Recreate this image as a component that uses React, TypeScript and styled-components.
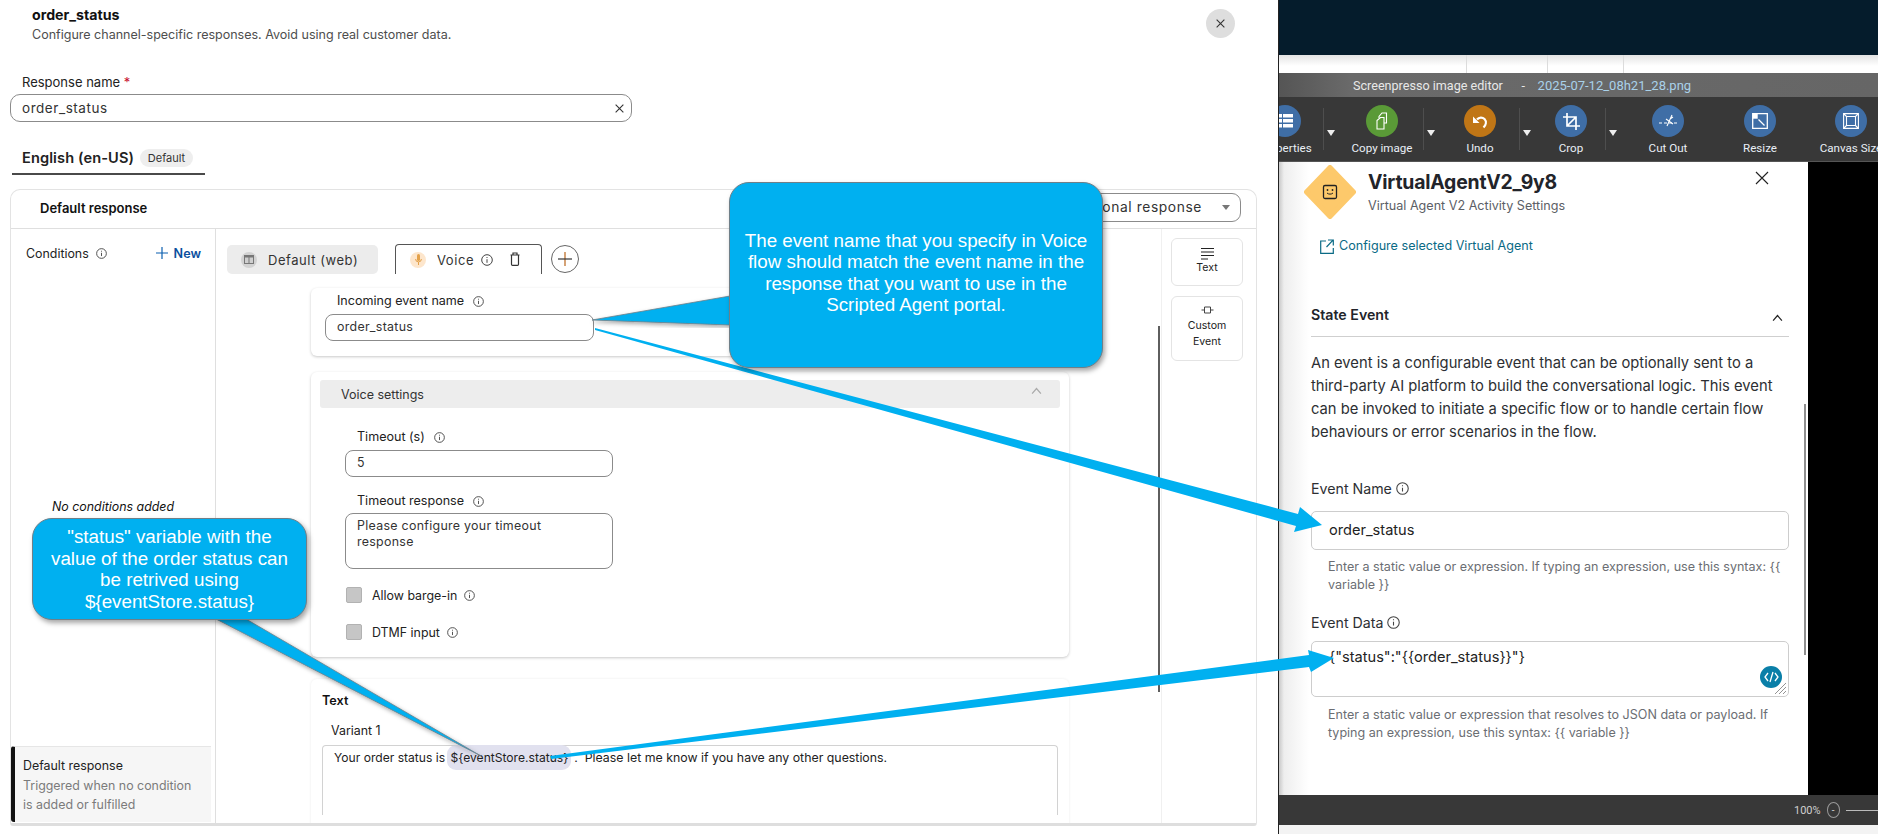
import React from "react";
import styled, { createGlobalStyle } from "styled-components";

const Global = createGlobalStyle`
  html, body { margin: 0; padding: 0; background: #fff; overflow: hidden; }
  * { box-sizing: border-box; }
  #root { width: 1878px; height: 834px; position: relative; overflow: hidden; font-family: Inter, "Liberation Sans", sans-serif; color: #1d1d1d; }
`;

const Page = styled.div`display: flex; width: 1878px; height: 834px;`;

/* ---------- left modal ---------- */
const Modal = styled.section`width: 1278px; height: 834px; background: #fff; position: relative; padding: 0 21px 0 10px; display: flex; flex-direction: column;`;
const ModalHead = styled.header`display: flex; justify-content: space-between; padding: 6px 0 0 22px; height: 70px;`;
const ModalTitle = styled.h1`margin: 0; font-size: 14.200px; line-height: 17px; font-weight: 700; color: #111;`;
const ModalSub = styled.p`margin: 3px 0 0; font-size: 12.520px; line-height: 17px; color: #4e4e4e;`;
const CloseRound = styled.div`width: 29px; height: 29px; border-radius: 50%; background: #dedede; display: flex; align-items: center; justify-content: center; margin: 3px 22px 0 0; color: #222;`;
const FieldLabel = styled.label`display: block; font-size: 13px; line-height: 18px; padding: 3px 0 0 12px; height: 24px; color: #222; b { color: #c8102e; font-weight: 400; }`;
const NameInput = styled.div`width: 622px; height: 28px; border: 1px solid #8b8b8b; border-radius: 10px; display: flex; align-items: center; justify-content: space-between; padding: 0 7px 0 11px; font-size: 13.500px; letter-spacing: .55px; color: #333;`;
const TabRow = styled.div`margin: 25px 0 0 2px; width: 193px; height: 28px; border-bottom: 2px solid #4a4a4a; display: flex; align-items: flex-start; padding: 1px 0 0 10px; gap: 6px;`;
const TabName = styled.span`font-size: 14.600px; font-weight: 600; line-height: 20px; letter-spacing: .1px; color: #222; white-space: nowrap;`;
const Badge = styled.span`flex: none; width: 53px; height: 18px; margin-top: 1px; border-radius: 9px; background: #eee; font-size: 11px; line-height: 18px; text-align: center; color: #333;`;

const Card = styled.div`margin-top: 14px; width: 1247px; height: 637px; border: 1px solid #e3e3e3; border-bottom: 3px solid #dedede; border-radius: 10px 10px 3px 3px; display: flex; flex-direction: column; overflow: hidden;`;
const CardHead = styled.div`height: 39px; flex: none; border-bottom: 1px solid #dfdfdf; display: flex; align-items: center; justify-content: space-between; padding: 0 15px 0 29px;`;
const CardTitle = styled.strong`font-size: 13px; font-weight: 600; color: #111; margin-top: -2px;`;
const Select = styled.div`width: 220px; height: 29px; margin-top: -4px; border: 1px solid #8b8b8b; border-radius: 9px; display: flex; align-items: center; justify-content: flex-end; padding-right: 10px; gap: 20px; font-size: 13.800px; letter-spacing: .6px; color: #333; white-space: nowrap;`;
const Caret = styled.i`flex: none; width: 0; height: 0; border-left: 4.500px solid transparent; border-right: 4.500px solid transparent; border-top: 5px solid #777;`;
const CardBody = styled.div`flex: 1; display: flex; min-height: 0;`;

const CondCol = styled.aside`width: 205px; flex: none; border-right: 1px solid #dfdfdf; padding: 16px 4px 1px 0; display: flex; flex-direction: column;`;
const CondHead = styled.div`display: flex; align-items: center; justify-content: space-between; padding: 0 10px 0 15px; font-size: 12.400px; height: 16px;`;
const CondLabel = styled.span`display: flex; align-items: center; gap: 7px; color: #222;`;
const NewLink = styled.span`display: flex; align-items: center; gap: 6px; color: #0b4f9e; font-weight: 600; font-size: 12.600px;`;
const NoCond = styled.em`display: block; margin: 238px 0 0 41px; font-size: 12.400px; line-height: 16px; color: #111;`;
const DefaultItem = styled.div`margin-top: auto; height: 76px; background: #f6f6f6; border-left: 4px solid #111; border-top: 1px solid #e6e6e6; border-radius: 3px 0 0 3px; padding: 9px 0 0 8px; font-size: 12.400px; line-height: 19.600px; color: #7b7b7b; div:first-child { color: #222; }`;

const Mid = styled.div`flex: 1; position: relative; padding: 15px 0 0 11px; min-width: 0; overflow: hidden;`;
const ScrollBar = styled.div`position: absolute; left: 942px; top: 97px; width: 2px; height: 366px; background: #5e5e5e;`;
const ChipRow = styled.div`display: flex; align-items: flex-start; height: 30px;`;
const ChipWeb = styled.div`width: 151px; height: 29px; margin-top: 1px; background: #ececec; border-radius: 5px; display: flex; align-items: center; gap: 11px; padding-left: 14px; font-size: 13px; letter-spacing: .55px; color: #333;`;
const ChipVoice = styled.div`margin-left: 17px; width: 147px; height: 30px; border: 1px solid #555; border-bottom: none; border-radius: 4px 4px 0 0; display: flex; align-items: center; padding-left: 14px; font-size: 13px; letter-spacing: .55px; color: #333;`;
const VoiceName = styled.span`margin: 0 7px 0 11px;`;
const TrashIcon = styled.svg`margin-left: 17px; margin-top: -1px;`;
const Dot = styled.span<{ $bg: string }>`width: 16px; height: 16px; border-radius: 50%; background: ${p => p.$bg}; display: flex; align-items: center; justify-content: center; flex: none;`;
const PlusRound = styled.div`margin: 1px 0 0 9px; width: 28px; height: 28px; border: 1px solid #666; border-radius: 50%; display: flex; align-items: center; justify-content: center;`;

const Panel = styled.div<{ $top: number; $h?: number }>`margin: ${p => p.$top}px 0 0 84px; width: 758px; ${p => (p.$h ? `height: ${p.$h}px;` : "")} background: #fff; border-radius: 6px; box-shadow: 0 1px 3px rgba(0, 0, 0, .22);`;
const FieldCaption = styled.div<{ $left: number }>`display: flex; align-items: center; gap: 9px; padding-left: ${p => p.$left}px; font-size: 12.550px; line-height: 16px; color: #222;`;
const SmallInput = styled.div<{ $w: number; $h: number }>`width: ${p => p.$w}px; height: ${p => p.$h}px; border: 1px solid #8b8b8b; border-radius: 8px; padding: 4px 11px; font-size: 12.400px; line-height: 16px; letter-spacing: .3px; color: #333;`;
const IncomingBox = styled.div`padding: 5px 0 0 14px; height: 68px; display: flex; flex-direction: column; gap: 5px;`;
const VoiceSettings = styled.div`padding-top: 8px;`;
const VoiceHead = styled.div`margin: 0 9px; height: 28px; background: #ededed; border-radius: 3px; display: flex; align-items: center; justify-content: space-between; padding: 0 18px 0 21px; font-size: 12.500px; color: #333;`;
const ChevronUp = styled.span`display: flex; margin-top: -7px;`;
const VoiceBody = styled.div`padding: 21px 0 0 34px; display: flex; flex-direction: column;`;
const Gap = styled.div<{ $h: number }>`height: ${p => p.$h}px;`;
const CheckRow = styled.div<{ $top: number }>`display: flex; align-items: center; gap: 10px; margin-top: ${p => p.$top}px; height: 16px; font-size: 12.400px; color: #222; padding-left: 1px;`;
const Check = styled.i`width: 16px; height: 16px; background: #c6c6c6; border: 1px solid #b2b2b2; border-radius: 2px;`;
const InfoGap = styled.span`margin-left: -3px; display: flex;`;
const TextPanel = styled.div`margin: 22px 0 0 84px; width: 758px; height: 200px; padding: 13px 11px 0; border-radius: 6px 6px 0 0; box-shadow: 0 0 3px rgba(0, 0, 0, .08);`;
const TextHead = styled.strong`display: block; font-size: 12.600px; line-height: 18px; font-weight: 600; color: #111;`;
const Variant = styled.div`margin: 12px 0 0 9px; font-size: 12.400px; line-height: 18px; color: #222;`;
const VariantBox = styled.div`margin-top: 5px; height: 70px; border: 1px solid #d2d2d2; border-bottom: none; border-radius: 4px 4px 0 0; padding: 4px 11px; font-size: 12.100px; line-height: 16px; color: #222; white-space: pre;`;
const Pill = styled.span`background: #e1e1ef; border-radius: 9px; padding: 5px 3px; margin: 0 -1px;`;
const TailText = styled.span`font-size: 12.350px; margin-left: -3px;`;
const Tools = styled.div`width: 95px; flex: none; padding: 9px 0 0 9px; display: flex; flex-direction: column; gap: 10px; border-left: 1px solid #f0f0f0; align-self: stretch;`;
const ToolBtn = styled.div<{ $h: number }>`width: 72px; height: ${p => p.$h}px; border: 1px solid #e4e4e4; border-radius: 6px; display: flex; flex-direction: column; align-items: center; padding-top: 8px; font-size: 10.600px; line-height: 16px; color: #222; text-align: center;`;
const ToolText = styled.div`margin-top: 3px;`;

/* ---------- right window ---------- */
const Editor = styled.section`flex: 1; display: flex; flex-direction: column; min-width: 0; height: 834px; border-left: 1px solid #222;`;
const Navy = styled.div`height: 55px; background: #051c2c;`;
const LightBand = styled.div`height: 18px; background: linear-gradient(#e4e4e4, #fff 60%); display: flex; padding-left: 187px;`;
const BandCell = styled.div<{ $w: number }>`width: ${p => p.$w}px; border-left: 1px solid #dcdcdc;`;
const TitleBar = styled.div`height: 24px; background: linear-gradient(90deg, #555, #6a6a6a 12%, #666); display: flex; align-items: center; padding-left: 74px; font-family: Roboto, sans-serif; font-size: 12.600px; color: #e8e8e8; white-space: pre; span { color: #a9d1ea; font-size: 13px; }`;
const Toolbar = styled.div`height: 65px; background: #383838; display: flex; overflow: hidden; border-bottom: 1px solid #555;`;
const ToolSlot = styled.div<{ $w: number; $lead?: number }>`flex: none; width: ${p => p.$w}px; margin-left: ${p => p.$lead ?? 0}px; display: flex; flex-direction: column; align-items: center; padding-top: 8px; font-family: Roboto, sans-serif; font-size: 11.600px; color: #e9eff6; white-space: nowrap;`;
const Bubble = styled.div<{ $bg: string }>`width: 32px; height: 32px; border-radius: 50%; background: ${p => p.$bg}; display: flex; align-items: center; justify-content: center; margin-bottom: 4px; flex: none;`;
const DropSlot = styled.div`flex: none; width: 18px; margin: 11px 0 11px; border-left: 1px solid #4e4e4e;`;
const DropCaret = styled.i`display: block; width: 0; height: 0; border-left: 4px solid transparent; border-right: 4px solid transparent; border-top: 6px solid #eee; margin: 22px 0 0 3px;`;
const EditorBody = styled.div`flex: 1; display: flex; min-height: 0;`;
const Sheet = styled.div`width: 529px; position: relative; background: linear-gradient(90deg, #c9c9c9, #eee 5px, #fff 30px); padding: 3px 19px 0 32px;`;
const Black = styled.div`flex: 1; background: #000;`;
const SheetHead = styled.div`display: flex; align-items: flex-start; margin-left: -7px; gap: 12px;`;
const SheetTitles = styled.div`flex: 1; padding-top: 3px;`;
const SheetTitle = styled.h2`margin: 0; font-size: 19.400px; line-height: 28px; font-weight: 700; color: #22242a; letter-spacing: -.2px;`;
const SheetSub = styled.p`margin: 1px 0 0; font-size: 12.600px; line-height: 18px; color: #5c6066;`;
const SheetClose = styled.span`margin: 6px 20px 0 0; display: flex; color: #222;`;
const ConfigLink = styled.a`display: flex; align-items: center; gap: 5px; margin: 18px 0 0 9px; font-size: 12.600px; line-height: 18px; color: #0a6a85;`;
const StateHead = styled.div`margin-top: 50px; height: 32px; display: flex; justify-content: space-between; align-items: flex-start; border-bottom: 1px solid #cfcfcf; font-size: 14.200px; line-height: 20px; font-weight: 600; color: #22242a; padding-right: 6px;`;
const ChevronSlot = styled.span`margin-top: 2px;`;
const Para = styled.p`margin: 15px 0 0; font-size: 14.750px; line-height: 22.900px; color: #2d2f33;`;
const EvLabel = styled.div<{ $top: number }>`display: flex; align-items: center; gap: 4px; margin-top: ${p => p.$top}px; font-size: 14.200px; line-height: 20px; color: #2d2f33;`;
const EvInput = styled.div`margin-top: 12px; height: 39px; border: 1px solid #cdcdcd; border-radius: 5px; display: flex; align-items: center; padding-left: 17px; font-size: 14.600px; color: #222;`;
const EvArea = styled.div`margin-top: 8px; height: 56px; border: 1px solid #cdcdcd; border-radius: 5px; padding: 5px 0 0 17px; font-size: 14.600px; line-height: 20px; color: #222; position: relative;`;
const CodeBtn = styled.div`position: absolute; right: 6px; bottom: 8px; width: 22px; height: 22px; border-radius: 50%; background: #0a7fa8; display: flex; align-items: center; justify-content: center;`;
const Grip = styled.svg`position: absolute; right: 1px; bottom: 1px;`;
const Help = styled.p<{ $top: number }>`margin: ${p => p.$top}px 0 0 17px; font-size: 12.550px; line-height: 18px; color: #6b6e73; white-space: nowrap;`;
const SheetBar = styled.div`position: absolute; left: 525px; top: 242px; width: 2px; height: 251px; background: #8f8f8f;`;
const StatusBar = styled.div`height: 30px; background: #383838; display: flex; align-items: center; padding-left: 515px; font-family: Roboto, sans-serif; font-size: 11px; color: #cfcfcf; gap: 6px; overflow: hidden;`;
const ZoomOut = styled.span`width: 16px; height: 16px; border: 1px solid #999; border-radius: 50%; display: flex; align-items: center; justify-content: center; font-size: 10px;`;
const ZoomLine = styled.i`width: 40px; height: 1px; background: #bbb;`;
const BottomGap = styled.div`height: 9px; background: #f3f3f3;`;

/* ---------- annotations ---------- */
const Overlay = styled.svg`position: absolute; left: 0; top: 0; pointer-events: none;`;
const Callout = styled.div<{ $x: number; $y: number; $w: number; $h: number; $pad?: number }>`position: absolute; left: ${p => p.$x}px; top: ${p => p.$y}px; width: ${p => p.$w}px; height: ${p => p.$h}px; padding-bottom: ${p => p.$pad ?? 0}px; background: #00b0f0; border: 1px solid #6f7f88; border-radius: 20px; box-shadow: 2px 3px 5px rgba(0, 0, 0, .35); color: #fff; font-family: "Liberation Sans", Arial, sans-serif; font-size: 18.800px; line-height: 21.500px; text-align: center; display: flex; align-items: center; justify-content: center; white-space: nowrap;`;

const Info: React.FC<{ s?: number }> = ({ s = 11 }) => (
  <svg width={s} height={s} viewBox="0 0 12 12" fill="none" stroke="#444" strokeWidth="1">
    <circle cx="6" cy="6" r="5.300" />
    <path d="M6 5.200v3.600M6 3v1" />
  </svg>
);
const X: React.FC<{ s?: number; c?: string; w?: number }> = ({ s = 10, c = "#333", w = 1.2 }) => (
  <svg width={s} height={s} viewBox="0 0 10 10" stroke={c} strokeWidth={w} fill="none">
    <path d="M.7.7l8.600 8.600M9.300.7L.7 9.300" />
  </svg>
);
const Chevron: React.FC<{ c?: string; s?: number }> = ({ c = "#888", s = 11 }) => (
  <svg width={s} height={s * 0.7} viewBox="0 0 10 7" fill="none" stroke={c} strokeWidth="1.100">
    <path d="M1 6l4-4.600L9 6" />
  </svg>
);

const P = { fill: "none", stroke: "#fff" };

export default function App() {
  return (
    <>
      <Global />
      <Page>
        <Modal>
          <ModalHead>
            <div>
              <ModalTitle>order_status</ModalTitle>
              <ModalSub>Configure channel-specific responses. Avoid using real customer data.</ModalSub>
            </div>
            <CloseRound><X s={9} /></CloseRound>
          </ModalHead>
          <FieldLabel>Response name <b>*</b></FieldLabel>
          <NameInput>order_status<X s={9} /></NameInput>
          <TabRow><TabName>English (en-US)</TabName><Badge>Default</Badge></TabRow>
          <Card>
            <CardHead>
              <CardTitle>Default response</CardTitle>
              <Select>Add conditional response<Caret /></Select>
            </CardHead>
            <CardBody>
              <CondCol>
                <CondHead>
                  <CondLabel>Conditions <Info /></CondLabel>
                  <NewLink>
                    <svg width="12" height="12" viewBox="0 0 12 12" stroke="#0b5fb0" strokeWidth="1.200"><path d="M6 0v12M0 6h12" /></svg>
                    New
                  </NewLink>
                </CondHead>
                <NoCond>No conditions added</NoCond>
                <DefaultItem>
                  <div>Default response</div>
                  <div>Triggered when no condition</div>
                  <div>is added or fulfilled</div>
                </DefaultItem>
              </CondCol>
              <Mid>
                <ScrollBar />
                <ChipRow>
                  <ChipWeb>
                    <Dot $bg="#d2d2d2">
                      <svg width="10" height="9" viewBox="0 0 10 9" fill="#777"><path d="M0 0h10v9H0z" /><path d="M1 2.500h3.500V8H1zM5.500 2.500H9V8H5.500z" fill="#cfcfcf" /></svg>
                    </Dot>
                    Default (web)
                  </ChipWeb>
                  <ChipVoice>
                    <Dot $bg="#fde6cc">
                      <svg width="7" height="11" viewBox="0 0 7 11" fill="none"><rect x="2" y="0" width="3" height="7" rx="1.500" fill="#e3a14a" /><path d="M.6 5a2.900 2.900 0 0 0 5.800 0M3.500 8v3" stroke="#e3a14a" /></svg>
                    </Dot>
                    <VoiceName>Voice</VoiceName>
                    <Info s={12} />
                    <TrashIcon width="10" height="14" viewBox="0 0 10 14" fill="none" stroke="#333" strokeWidth="1.200"><path d="M.5 3h9M1.500 3v9.300c0 .7.500 1.100 1 1.100h5c.5 0 1-.4 1-1.100V3M3 3V1h4v2" /></TrashIcon>
                  </ChipVoice>
                  <PlusRound>
                    <svg width="14" height="14" viewBox="0 0 14 14" strokeWidth="1.200"><path d="M7 0v14" stroke="#b9651a" /><path d="M0 7h14" stroke="#333" /></svg>
                  </PlusRound>
                </ChipRow>
                <Panel $top={14}>
                  <IncomingBox>
                    <FieldCaption $left={12}>Incoming event name <Info /></FieldCaption>
                    <SmallInput $w={269} $h={27}>order_status</SmallInput>
                  </IncomingBox>
                </Panel>
                <Panel $top={16} $h={285}>
                  <VoiceSettings>
                    <VoiceHead>Voice settings<ChevronUp><Chevron c="#aaa" /></ChevronUp></VoiceHead>
                    <VoiceBody>
                      <FieldCaption $left={12}>Timeout (s) <Info /></FieldCaption>
                      <Gap $h={5} />
                      <SmallInput $w={268} $h={27}>5</SmallInput>
                      <Gap $h={16} />
                      <FieldCaption $left={12}>Timeout response <Info /></FieldCaption>
                      <Gap $h={4} />
                      <SmallInput $w={268} $h={56}>Please configure your timeout<br />response</SmallInput>
                      <CheckRow $top={18}><Check />Allow barge-in<InfoGap><Info /></InfoGap></CheckRow>
                      <CheckRow $top={21}><Check />DTMF input<InfoGap><Info /></InfoGap></CheckRow>
                    </VoiceBody>
                  </VoiceSettings>
                </Panel>
                <TextPanel>
                  <TextHead>Text</TextHead>
                  <Variant>Variant 1</Variant>
                  <VariantBox>Your order status is <Pill>{"${eventStore.status}"}</Pill>  <TailText>.  Please let me know if you have any other questions.</TailText></VariantBox>
                </TextPanel>
              </Mid>
              <Tools>
                <ToolBtn $h={48}>
                  <svg width="13" height="13" viewBox="0 0 13 13" stroke="#222" strokeWidth="1.200"><path d="M0 1.500h13M0 5h13M0 8.500h13M0 12h7" /></svg>
                  Text
                </ToolBtn>
                <ToolBtn $h={65}>
                  <svg width="13" height="10" viewBox="0 0 13 10" fill="none" stroke="#444" strokeWidth="1"><path d="M3.500 2h6v6h-6zM3.500 5H.5M9.500 5h3" /></svg>
                  <ToolText>Custom<br />Event</ToolText>
                </ToolBtn>
              </Tools>
            </CardBody>
          </Card>
        </Modal>

        <Editor>
          <Navy />
          <LightBand><BandCell $w={81} /><BandCell $w={76} /><BandCell $w={10} /></LightBand>
          <TitleBar>Screenpresso image editor      -    <span>2025-07-12_08h21_28.png</span></TitleBar>
          <Toolbar>
            <ToolSlot $w={76} $lead={-32}>
              <Bubble $bg="#3f6ea6">
                <svg width="16" height="14" viewBox="0 0 16 14" fill="#fff"><path d="M0 0h5v3.500H0zM6 0h10v3.500H6zM0 5h5v3.500H0zM6 5h10v3.500H6zM0 10h5v3.500H0zM6 10h10v3.500H6z" /></svg>
              </Bubble>
              Properties
            </ToolSlot>
            <DropSlot><DropCaret /></DropSlot>
            <ToolSlot $w={82}>
              <Bubble $bg="#5a9a37">
                <svg width="14" height="18" viewBox="0 0 14 18" {...P} strokeWidth="1.100"><path d="M4 6V4.500L7 1h4.500v10H9" /><path d="M2 8.500L5.500 5.500H9V17H2z" /></svg>
              </Bubble>
              Copy image
            </ToolSlot>
            <DropSlot><DropCaret /></DropSlot>
            <ToolSlot $w={78}>
              <Bubble $bg="#c07616">
                <svg width="16" height="15" viewBox="0 0 16 15" {...P} strokeWidth="2.200"><path d="M5 5.500C7 3 10.500 3 12.500 5c2.300 2.500 1.500 6-1 8.500" /><path d="M1 2.500L7.500 9H1z" fill="#fff" stroke="none" /></svg>
              </Bubble>
              Undo
            </ToolSlot>
            <DropSlot><DropCaret /></DropSlot>
            <ToolSlot $w={68}>
              <Bubble $bg="#3f6ea6">
                <svg width="17" height="17" viewBox="0 0 17 17" {...P} strokeWidth="1.700"><path d="M4 0v13h13M0 4h13v13M13 4L4 13" /></svg>
              </Bubble>
              Crop
            </ToolSlot>
            <DropSlot><DropCaret /></DropSlot>
            <ToolSlot $w={90}>
              <Bubble $bg="#3f6ea6">
                <svg width="18" height="14" viewBox="0 0 18 14" {...P} strokeWidth="1.100"><path d="M0 9h3M5 9h3M10 9h3M15 9h3" /><path d="M8 12l5-11M7 5l7 5M14 3l-3 2" /></svg>
              </Bubble>
              Cut Out
            </ToolSlot>
            <ToolSlot $w={94}>
              <Bubble $bg="#3f6ea6">
                <svg width="16" height="16" viewBox="0 0 16 16" fill="none"><path d="M.7.7h14.600v14.600H.7z" stroke="#fff" strokeWidth="1.300" /><path d="M.7.7h5v5h-5z" fill="#fff" /><path d="M6.500 6.500l6 6" stroke="#fff" strokeWidth="1.300" /></svg>
              </Bubble>
              Resize
            </ToolSlot>
            <ToolSlot $w={88}>
              <Bubble $bg="#3f6ea6">
                <svg width="16" height="16" viewBox="0 0 16 16" {...P} strokeWidth="1.100"><path d="M.6.6h14.800v14.800H.6zM3.500 3.500h9v9h-9zM.6.6l2.900 2.900M15.400.6l-2.900 2.900M.6 15.400l2.900-2.900M15.400 15.400l-2.900-2.900" /></svg>
              </Bubble>
              Canvas Size
            </ToolSlot>
          </Toolbar>
          <EditorBody>
            <Sheet>
              <SheetBar />
              <SheetHead>
                <svg width="52" height="54" viewBox="0 0 52 54">
                  <path d="M26 2.500 L49.500 27 L26 51.500 L2.500 27 Z" fill="#fdc96b" stroke="#fdc96b" strokeLinejoin="round" strokeWidth="5" />
                  <rect x="19.500" y="20.500" width="13" height="13" rx="1.500" fill="none" stroke="#222" strokeWidth="1.300" />
                  <path d="M23 28c1.500 1.500 4.500 1.500 6 0" fill="none" stroke="#222" />
                  <circle cx="23.500" cy="25" r=".9" fill="#222" />
                  <circle cx="28.500" cy="25" r=".9" fill="#222" />
                </svg>
                <SheetTitles>
                  <SheetTitle>VirtualAgentV2_9y8</SheetTitle>
                  <SheetSub>Virtual Agent V2 Activity Settings</SheetSub>
                </SheetTitles>
                <SheetClose><X s={14} c="#222" w={0.8} /></SheetClose>
              </SheetHead>
              <ConfigLink>
                <svg width="14" height="15" viewBox="0 0 14 15" fill="none" stroke="#0a6a85" strokeWidth="1.200"><path d="M6 2H.7v12.300h12.600V9M8 1h5.300v5.500M13 1.200L6.500 8" /></svg>
                Configure selected Virtual Agent
              </ConfigLink>
              <StateHead>State Event<ChevronSlot><Chevron c="#222" s={11} /></ChevronSlot></StateHead>
              <Para>An event is a configurable event that can be optionally sent to a<br />third-party AI platform to build the conversational logic. This event<br />can be invoked to initiate a specific flow or to handle certain flow<br />behaviours or error scenarios in the flow.</Para>
              <EvLabel $top={35}>Event Name <Info s={13} /></EvLabel>
              <EvInput>order_status</EvInput>
              <Help $top={8}>Enter a static value or expression. If typing an expression, use this syntax: {"{{"}<br />variable {"}}"}</Help>
              <EvLabel $top={19}>Event Data <Info s={13} /></EvLabel>
              <EvArea>
                {'{"status":"{{order_status}}"}'}
                <CodeBtn>
                  <svg width="15" height="12" viewBox="0 0 15 12" fill="none" stroke="#fff" strokeWidth="1.300"><path d="M4 2L1 6l3 4M11 2l3 4-3 4M9 1L6 11" /></svg>
                </CodeBtn>
                <Grip width="13" height="13" viewBox="0 0 13 13" stroke="#777" strokeWidth="0.800"><path d="M1 12L12 1M5 12l7-7M9 12l3-3" /></Grip>
              </EvArea>
              <Help $top={9}>Enter a static value or expression that resolves to JSON data or payload. If<br />typing an expression, use this syntax: {"{{ variable }}"}</Help>
            </Sheet>
            <Black />
          </EditorBody>
          <StatusBar>100%<ZoomOut>-</ZoomOut><ZoomLine /></StatusBar>
          <BottomGap />
        </Editor>
      </Page>

      <Overlay width="1878" height="834" viewBox="0 0 1878 834">
        <defs>
          <filter id="soft" x="-5%" y="-5%" width="110%" height="115%">
            <feDropShadow dx="1.500" dy="2" stdDeviation="2" floodColor="#000" floodOpacity="0.350" />
          </filter>
        </defs>
        <polygon points="216,619 246,619 481,756" fill="#00b0f0" stroke="#6f7f88" strokeWidth="0.800" filter="url(#soft)" />
        <polygon points="730,296 730,325 592,320" fill="#00b0f0" stroke="#6f7f88" strokeWidth="0.800" filter="url(#soft)" />
        <polygon points="595,328 1298,514 1300,507 1322,525 1294,532 1296,526 595,330" fill="#00b0f0" />
        <polygon points="550,756 1309,655 1308,650 1334,658 1311,672 1309,667 551,759" fill="#00b0f0" />
      </Overlay>
      <Callout $x={729} $y={182} $w={374} $h={186} $pad={5}>
        <div>The event name that you specify in Voice<br />flow should match the event name in the<br />response that you want to use in the<br />Scripted Agent portal.</div>
      </Callout>
      <Callout $x={32} $y={518} $w={275} $h={102}>
        <div>"status" variable with the<br />value of the order status can<br />be retrived using<br />{"${eventStore.status}"}</div>
      </Callout>
    </>
  );
}
